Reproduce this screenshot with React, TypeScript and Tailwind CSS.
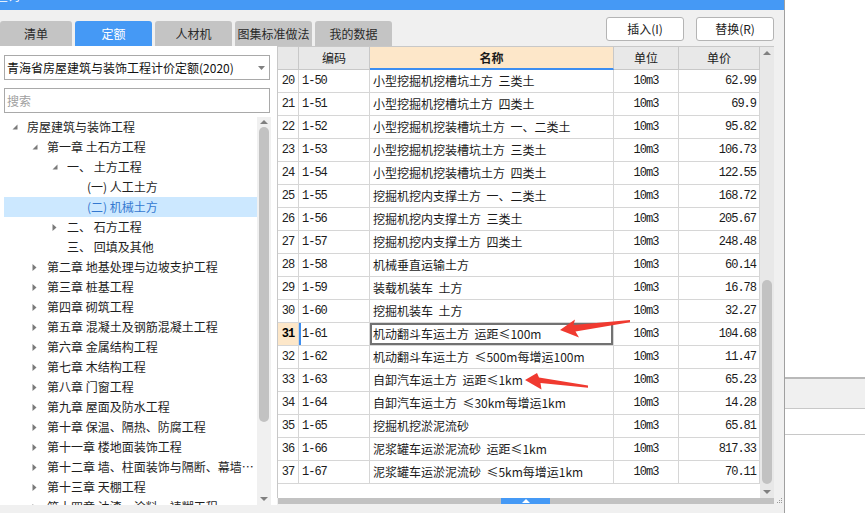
import React from 'react';

type TreeNode = { level: number; text: string; icon?: 'open' | 'closed'; selected?: boolean };

const treeNodes: TreeNode[] = [
  { level: 0, text: '房屋建筑与装饰工程', icon: 'open' },
  { level: 1, text: '第一章 土石方工程', icon: 'open' },
  { level: 2, text: '一、 土方工程', icon: 'open' },
  { level: 3, text: '(一) 人工土方' },
  { level: 3, text: '(二) 机械土方', selected: true },
  { level: 2, text: '二、 石方工程', icon: 'closed' },
  { level: 2, text: '三、 回填及其他' },
  { level: 1, text: '第二章 地基处理与边坡支护工程', icon: 'closed' },
  { level: 1, text: '第三章 桩基工程', icon: 'closed' },
  { level: 1, text: '第四章 砌筑工程', icon: 'closed' },
  { level: 1, text: '第五章 混凝土及钢筋混凝土工程', icon: 'closed' },
  { level: 1, text: '第六章 金属结构工程', icon: 'closed' },
  { level: 1, text: '第七章 木结构工程', icon: 'closed' },
  { level: 1, text: '第八章 门窗工程', icon: 'closed' },
  { level: 1, text: '第九章 屋面及防水工程', icon: 'closed' },
  { level: 1, text: '第十章 保温、隔热、防腐工程', icon: 'closed' },
  { level: 1, text: '第十一章 楼地面装饰工程', icon: 'closed' },
  { level: 1, text: '第十二章 墙、柱面装饰与隔断、幕墙工程', icon: 'closed' },
  { level: 1, text: '第十三章 天棚工程', icon: 'closed' },
  { level: 1, text: '第十四章 油漆、涂料、裱糊工程', icon: 'closed' },
];

const indent = ['pl-[8px]', 'pl-[28px]', 'pl-[48px]', 'pl-[68px]'];

type Row = { no: number; code: string; name: string; price: string };

const rows: Row[] = [
  { no: 20, code: '1-50', name: '小型挖掘机挖槽坑土方  三类土', price: '62.99' },
  { no: 21, code: '1-51', name: '小型挖掘机挖槽坑土方  四类土', price: '69.9' },
  { no: 22, code: '1-52', name: '小型挖掘机挖装槽坑土方  一、二类土', price: '95.82' },
  { no: 23, code: '1-53', name: '小型挖掘机挖装槽坑土方  三类土', price: '106.73' },
  { no: 24, code: '1-54', name: '小型挖掘机挖装槽坑土方  四类土', price: '122.55' },
  { no: 25, code: '1-55', name: '挖掘机挖内支撑土方  一、二类土', price: '168.72' },
  { no: 26, code: '1-56', name: '挖掘机挖内支撑土方  三类土', price: '205.67' },
  { no: 27, code: '1-57', name: '挖掘机挖内支撑土方  四类土', price: '248.48' },
  { no: 28, code: '1-58', name: '机械垂直运输土方', price: '60.14' },
  { no: 29, code: '1-59', name: '装载机装车  土方', price: '16.78' },
  { no: 30, code: '1-60', name: '挖掘机装车  土方', price: '32.27' },
  { no: 31, code: '1-61', name: '机动翻斗车运土方  运距≤100m', price: '104.68' },
  { no: 32, code: '1-62', name: '机动翻斗车运土方  ≤500m每增运100m', price: '11.47' },
  { no: 33, code: '1-63', name: '自卸汽车运土方  运距≤1km', price: '65.23' },
  { no: 34, code: '1-64', name: '自卸汽车运土方  ≤30km每增运1km', price: '14.28' },
  { no: 35, code: '1-65', name: '挖掘机挖淤泥流砂', price: '65.81' },
  { no: 36, code: '1-66', name: '泥浆罐车运淤泥流砂  运距≤1km', price: '817.33' },
  { no: 37, code: '1-67', name: '泥浆罐车运淤泥流砂  ≤5km每增运1km', price: '70.11' },
];

const OpenArrow = () => (
  <svg width="6" height="6" viewBox="0 0 6 6">
    <polygon points="5.5,0.5 5.5,5.5 0.5,5.5" fill="#7a7a7a" />
  </svg>
);

const ClosedArrow = () => (
  <svg width="5" height="7" viewBox="0 0 5 7">
    <polygon points="0.5,0 4.5,3.5 0.5,7" fill="#7a7a7a" />
  </svg>
);

const UpTri = ({ color = '#808080' }: { color?: string }) => (
  <svg width="8" height="4" viewBox="0 0 8 4">
    <polygon points="0,4 8,4 4,0" fill={color} />
  </svg>
);

const DownTri = () => (
  <svg width="8" height="4" viewBox="0 0 8 4">
    <polygon points="0,0 8,0 4,4" fill="#808080" />
  </svg>
);

const tabs = ['清单', '定额', '人材机', '图集标准做法', '我的数据'];

export default function App() {
  return (
    <div className="relative flex h-[513px] w-[865px] overflow-hidden bg-white font-['Noto_Sans_CJK_SC','Noto_Sans',sans-serif] text-[12px] text-[#1a1a1a]">
      <div className="flex h-full w-[785px] flex-col border-r border-[#a0a0a0] bg-[#f0f0f0]">
        {/* title bar, cut off at the top */}
        <div className="h-[10px] overflow-hidden bg-[#4599f5]">
          <span className="-mt-[12px] ml-[-4px] block leading-[16px] text-white">查询</span>
        </div>

        {/* tabs + buttons */}
        <div className="flex h-[36px] justify-between">
          <div className="flex items-end gap-[3px]">
            {tabs.map((t, i) => (
              <div
                key={t}
                className={`flex h-[25px] items-center justify-center rounded-t-[3px] ${i === 0 ? 'w-[72px]' : 'w-[77px]'} ${
                  i === 1 ? 'bg-[#4599f5] text-white' : 'bg-[#c4c4c4] text-[#2a2a2a]'
                }`}
              >
                {t}
              </div>
            ))}
          </div>
          <div className="flex gap-[12px] pr-[10px] pt-[7px]">
            <button className="flex h-[24px] w-[78px] items-center justify-center rounded-[3px] border border-[#b4b4b4] bg-white">插入(I)</button>
            <button className="flex h-[24px] w-[78px] items-center justify-center rounded-[3px] border border-[#b4b4b4] bg-white">替换(R)</button>
          </div>
        </div>

        {/* main area */}
        <div className="flex h-[459px]">
          {/* left tree panel */}
          <div className="flex w-[277px] flex-col bg-white pl-[4px] pt-[9px]">
            <div className="flex h-[25px] w-[266px] items-center justify-between border border-[#a9a9a9] bg-white pl-[2px] pr-[4px]">
              <span className="whitespace-nowrap text-[#111]">青海省房屋建筑与装饰工程计价定额(2020)</span>
              <svg width="7" height="4" viewBox="0 0 7 4">
                <polygon points="0,0 7,0 3.5,4" fill="#808080" />
              </svg>
            </div>
            <div className="mt-[8px] flex h-[25px] w-[266px] items-center border border-[#a9a9a9] bg-white pl-[2px] text-[#a0a0a0]">
              搜索
            </div>
            <div className="mt-[4px] flex min-h-0 flex-1">
              <div className="w-[253px] overflow-hidden">
                {treeNodes.map((n, i) => (
                  <div
                    key={i}
                    className={`flex h-[20px] items-center ${indent[n.level]} ${n.selected ? 'bg-[#cce8ff] text-[#3478d0]' : 'text-[#1e1e1e]'}`}
                  >
                    <span className="flex w-[15px] shrink-0 items-center">
                      {n.icon === 'open' ? <OpenArrow /> : n.icon === 'closed' ? <ClosedArrow /> : null}
                    </span>
                    <span className="truncate whitespace-nowrap leading-[20px]">{n.text}</span>
                  </div>
                ))}
              </div>
              <div className="flex w-[14px] flex-col items-center bg-[#f0f0f0]">
                <div className="mt-[3px] flex h-[4px] items-center">
                  <UpTri />
                </div>
                <div className="mt-[3px] h-[295px] w-[10px] rounded-full bg-[#c2c2c2]" />
                <div className="mt-auto mb-[4px] flex h-[4px] items-center">
                  <DownTri />
                </div>
              </div>
            </div>
          </div>

          {/* right table panel */}
          <div className="flex w-[507px] flex-col">
            <div className="flex h-[452px]">
              <div className="flex w-[497px] border-l border-t border-[#c8c8c8] bg-white">
                <div className="flex w-[482px] flex-col">
                  <div className="flex h-[23px] shrink-0">
                    <div className="w-[21px] border-b border-r border-[#c8c8c8] bg-[#e8e8e8]" />
                    <div className="flex w-[71px] items-center justify-center border-b border-r border-[#c8c8c8] bg-[#e8e8e8]">编码</div>
                    <div className="flex w-[244px] items-center justify-center border-b-2 border-r border-b-[#3d8ef0] border-r-[#c8c8c8] bg-[#fde7c9] font-bold">名称</div>
                    <div className="flex w-[65px] items-center justify-center border-b border-r border-[#c8c8c8] bg-[#e8e8e8]">单位</div>
                    <div className="flex w-[81px] items-center justify-center border-b border-r border-[#c8c8c8] bg-[#e8e8e8]">单价</div>
                  </div>
                  {rows.map((r) => {
                    const sel = r.no === 31;
                    return (
                      <div key={r.no} className="flex h-[23px] shrink-0">
                        <div
                          className={`flex w-[21px] items-center justify-center border-b border-r border-[#d6d6d6] font-['Liberation_Mono',monospace] text-[12px] tracking-[-1px] ${
                            sel ? 'bg-[#fde7c9] font-bold text-black' : 'text-[#222]'
                          }`}
                        >
                          {r.no}
                        </div>
                        <div
                          className={`flex w-[71px] items-center border-b border-r border-[#d6d6d6] pl-[3px] font-['Liberation_Mono',monospace] text-[12px] tracking-[-1px] ${
                            sel ? 'shadow-[inset_2px_0_0_#3d8ef0]' : ''
                          }`}
                        >
                          {r.code}
                        </div>
                        <div
                          className={`flex w-[244px] items-center overflow-hidden whitespace-pre border-b border-r border-[#d6d6d6] pl-[3px] ${
                            sel ? 'shadow-[inset_0_0_0_2px_#727272]' : ''
                          }`}
                        >
                          {r.name}
                        </div>
                        <div className="flex w-[65px] items-center justify-center border-b border-r border-[#d6d6d6] font-['Liberation_Mono',monospace] text-[12px] tracking-[-1px]">
                          10m3
                        </div>
                        <div className="flex w-[81px] items-center justify-end border-b border-r border-[#d6d6d6] pr-[3px] font-['Liberation_Mono',monospace] text-[12px] tracking-[-1px]">
                          {r.price}
                        </div>
                      </div>
                    );
                  })}
                </div>
                <div className="flex w-[14px] flex-col items-center bg-[#e8e8e8]">
                  <div className="mt-[4px] flex h-[4px] items-center">
                    <UpTri />
                  </div>
                  <div className="mt-[225px] h-[204px] w-[10px] rounded-full bg-[#c2c2c2]" />
                  <div className="mt-[6px] flex h-[4px] items-center">
                    <DownTri />
                  </div>
                </div>
              </div>
              <div className="w-[10px]" />
            </div>
            <div className="flex h-[6px]">
              <div className="ml-[1px] flex h-[6px] w-[496px] bg-[#c2c2c2] pl-[223px]">
                <div className="flex h-[6px] w-[49px] items-center justify-center bg-[#4599f5]">
                  <UpTri color="#ffffff" />
                </div>
              </div>
              <div className="flex w-[10px] items-end justify-end pr-[1px]">
                <svg width="8" height="6" viewBox="0 0 8 6">
                  <rect x="6" y="0" width="1" height="1" fill="#9a9a9a" />
                  <rect x="4" y="2" width="1" height="1" fill="#9a9a9a" />
                  <rect x="6" y="2" width="1" height="1" fill="#9a9a9a" />
                  <rect x="2" y="4" width="1" height="1" fill="#9a9a9a" />
                  <rect x="4" y="4" width="1" height="1" fill="#9a9a9a" />
                  <rect x="6" y="4" width="1" height="1" fill="#9a9a9a" />
                </svg>
              </div>
            </div>
          </div>
        </div>
        <div className="flex-1" />
      </div>

      {/* window behind, to the right */}
      <div className="flex flex-1 flex-col">
        <div className="h-[377px]" />
        <div className="h-[2px] bg-[#b9b9b9]" />
        <div className="h-[29px] bg-[#f0f0f0]" />
        <div className="h-[1px] bg-[#c8c8c8]" />
        <div className="h-[25px]" />
        <div className="h-[1px] bg-[#c8c8c8]" />
      </div>

      {/* red annotation arrows */}
      <svg className="pointer-events-none absolute left-0 top-0" width="865" height="513" viewBox="0 0 865 513">
        <polygon points="560,330 575,319.5 573.5,325 630,320 630,322.2 575.5,331.5 579,337.5" fill="#f03a30" />
        <polygon points="525,380 537,373 539,377.5 588,385.5 588,387.8 540.5,383 541.5,389.5" fill="#f03a30" />
      </svg>
    </div>
  );
}
